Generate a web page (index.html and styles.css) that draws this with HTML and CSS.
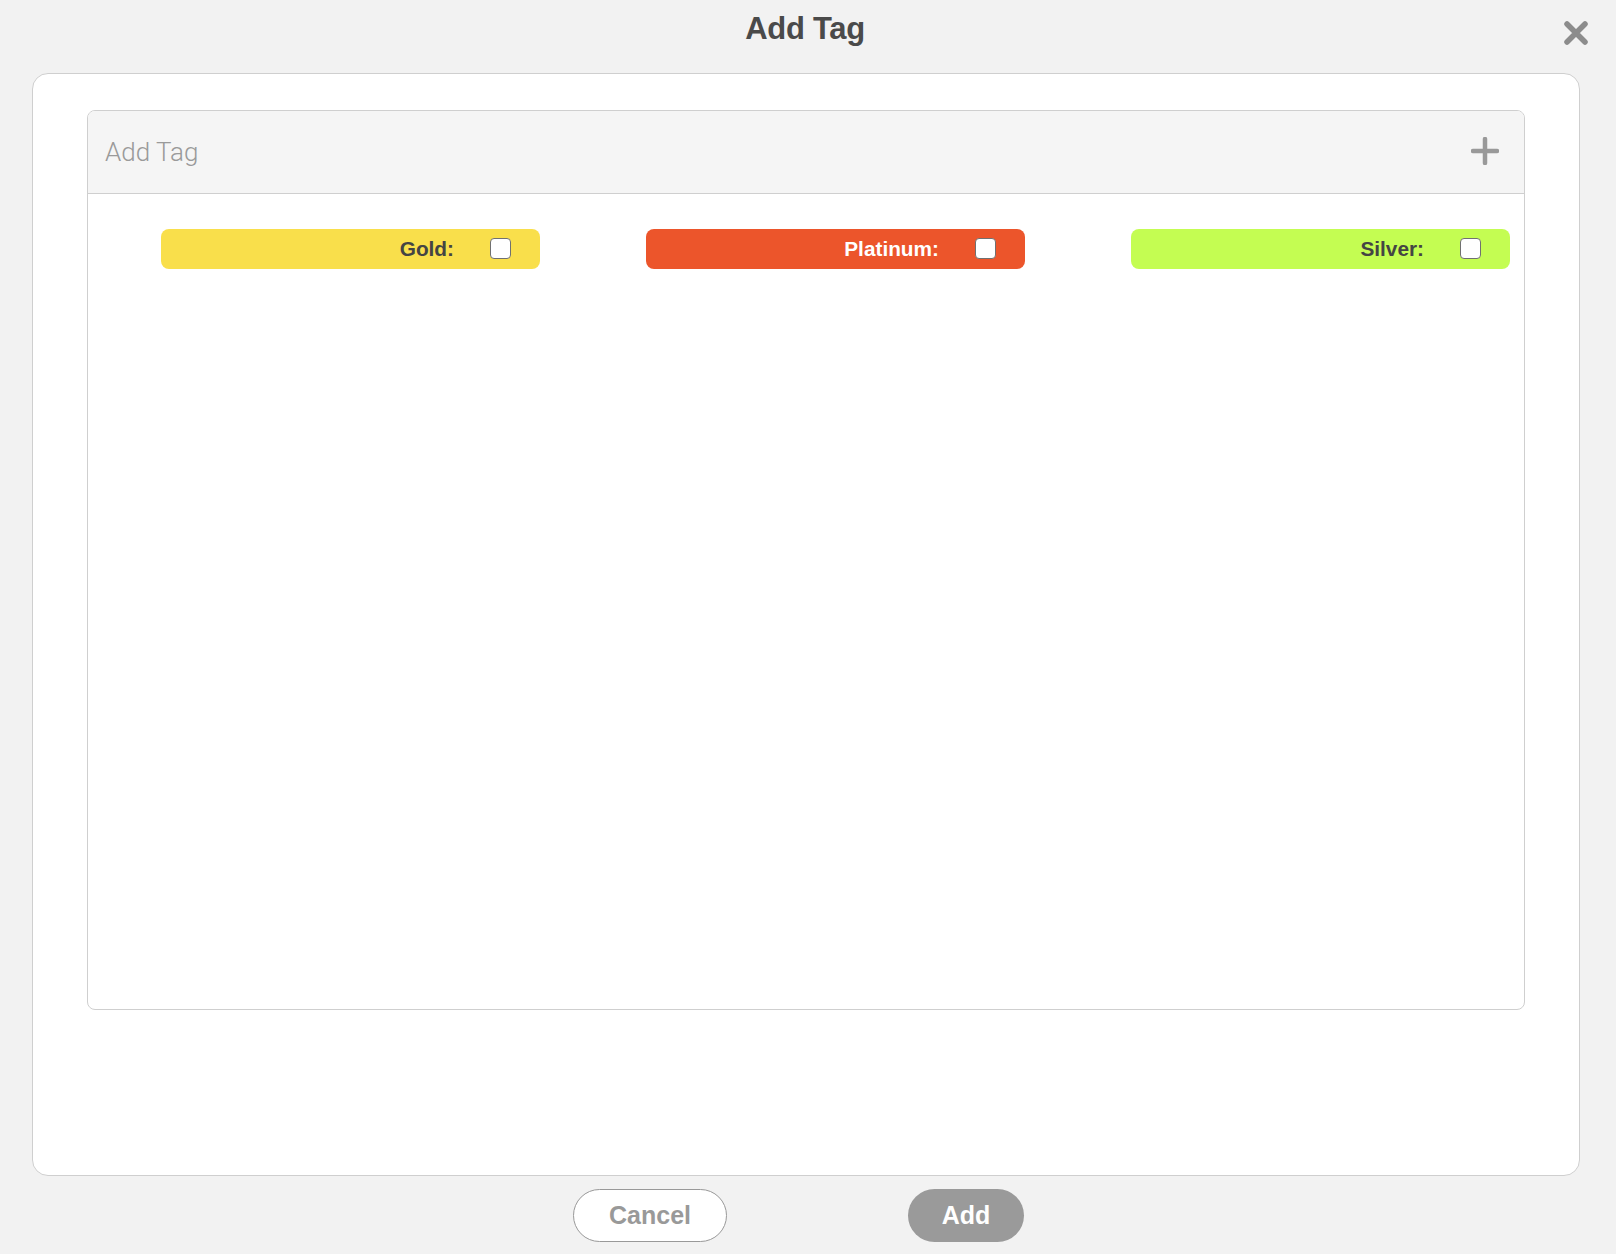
FILE: index.html
```html
<!DOCTYPE html>
<html>
<head>
<meta charset="utf-8">
<link rel="stylesheet" href="styles.css">
</head>
<body>
<div class="page">
  <header class="top">
    <h1 class="title">Add Tag</h1>
    <button class="close" aria-label="Close">
      <svg width="26" height="26" viewBox="0 0 26 26"><path d="M4 4 L22 22 M22 4 L4 22" stroke="#8c8c8c" stroke-width="5.5" stroke-linecap="round" fill="none"/></svg>
    </button>
  </header>
  <main class="card">
    <section class="tagbox">
      <div class="tagbox-head">
        <span class="placeholder">Add Tag</span>
        <svg class="plus" width="28" height="28" viewBox="0 0 28 28"><path d="M14 2 V26 M2 14 H26" stroke="#999" stroke-width="4.5" stroke-linecap="round" fill="none"/></svg>
      </div>
      <div class="tags">
        <label class="tag tag-gold"><span class="tag-name">Gold:</span><span class="check"></span></label>
        <label class="tag tag-platinum"><span class="tag-name">Platinum:</span><span class="check"></span></label>
        <label class="tag tag-silver"><span class="tag-name">Silver:</span><span class="check"></span></label>
      </div>
    </section>
  </main>
  <footer class="actions">
    <button class="btn btn-cancel">Cancel</button>
    <button class="btn btn-add">Add</button>
  </footer>
</div>
</body>
</html>
```
FILE: styles.css
```css
* { box-sizing: border-box; }
html, body { margin: 0; padding: 0; }
body {
  background: #f2f2f2;
  font-family: "Liberation Sans", Arial, Helvetica, sans-serif;
  width: 1616px;
  height: 1254px;
  overflow: hidden;
}
.page { position: relative; }
.top {
  height: 73px;
  padding-top: 12px;
  text-align: center;
}
.title {
  margin: 0;
  font-size: 31px;
  line-height: 34px;
  font-weight: bold;
  color: #4a4a4a;
  letter-spacing: -0.3px;
  padding-right: 6px;
}
.close {
  position: absolute;
  top: 20px;
  right: 27px;
  width: 26px;
  height: 26px;
  padding: 0;
  border: 0;
  background: none;
}
.close svg { display: block; }
.card {
  margin: 0 36px 0 32px;
  height: 1103px;
  background: #fff;
  border: 1px solid #cfcfcf;
  border-radius: 16px;
  padding: 36px 54px 0 54px;
}
.tagbox {
  height: 900px;
  border: 1px solid #cfcfcf;
  border-radius: 8px;
  overflow: hidden;
}
.tagbox-head {
  height: 83px;
  background: #f5f5f5;
  border-bottom: 1px solid #cfcfcf;
  display: flex;
  align-items: center;
  justify-content: space-between;
  padding: 0 25px 0 17px;
}
.placeholder {
  font-family: Roboto, "Liberation Sans", sans-serif;
  font-weight: 300;
  font-size: 26px;
  color: #9a9a9a;
  padding-top: 0;
}
.plus { display: block; margin-top: -2px; }
.tags {
  display: flex;
  gap: 106px;
  padding: 35px 0 0 73px;
}
.tag {
  width: 379px;
  height: 40px;
  border-radius: 8px;
  display: flex;
  align-items: center;
  justify-content: flex-end;
  padding-right: 29px;
}
.tag-name {
  font-size: 20.8px;
  font-weight: bold;
  color: #444;
  margin-right: 36px;
}
.tag-gold { background: #f9df4b; }
.tag-platinum { background: #ec552b; }
.tag-platinum .tag-name { color: #fff; }
.tag-silver { background: #c4fd52; }
.check {
  width: 21px;
  height: 21px;
  background: #fff;
  border: 1.5px solid #707070;
  border-radius: 4px;
  margin-top: -2px;
}
.actions {
  display: flex;
  justify-content: center;
  gap: 181px;
  padding: 13px 19px 0 0;
}
.btn {
  height: 53px;
  border-radius: 27px;
  font-family: "Liberation Sans", Arial, sans-serif;
  font-weight: bold;
  font-size: 25px;
  padding: 0;
}
.btn-cancel {
  width: 154px;
  background: #fff;
  border: 1px solid #999;
  color: #999;
}
.btn-add {
  width: 116px;
  background: #9a9a9a;
  border: 0;
  color: #fff;
}
```
